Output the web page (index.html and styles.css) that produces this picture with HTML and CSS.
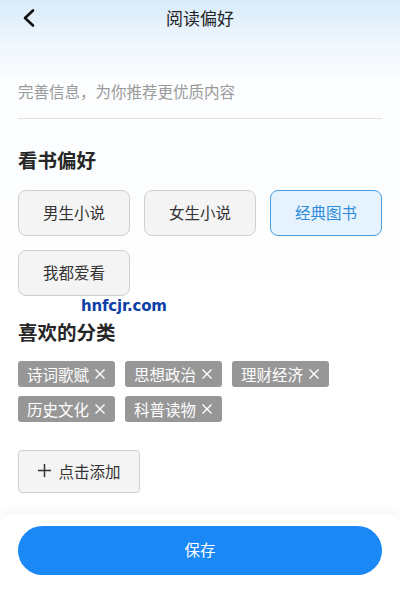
FILE: index.html
```html
<!DOCTYPE html>
<html lang="zh">
<head>
<meta charset="utf-8">
<link rel="stylesheet" href="styles.css">
</head>
<body>
<div class="page">
  <header class="topbar">
    <svg class="back" width="14" height="20" viewBox="0 0 14 20"><path d="M11 2.5 L3 10 L11 17.5" fill="none" stroke="#111" stroke-width="2.6" stroke-linecap="round" stroke-linejoin="round"/></svg>
    <h1 class="title">阅读偏好</h1>
  </header>
  <main class="content">
    <p class="intro">完善信息，为你推荐更优质内容</p>
    <h2 class="section-title first">看书偏好</h2>
    <div class="choices">
      <button class="choice">男生小说</button>
      <button class="choice">女生小说</button>
      <button class="choice selected">经典图书</button>
      <button class="choice">我都爱看</button>
    </div>
    <h2 class="section-title second">喜欢的分类</h2>
    <div class="tags">
      <span class="tag">诗词歌赋<svg class="x" viewBox="0 0 12 12"><path d="M1.5 1.5 L10.5 10.5 M10.5 1.5 L1.5 10.5"/></svg></span>
      <span class="tag">思想政治<svg class="x" viewBox="0 0 12 12"><path d="M1.5 1.5 L10.5 10.5 M10.5 1.5 L1.5 10.5"/></svg></span>
      <span class="tag">理财经济<svg class="x" viewBox="0 0 12 12"><path d="M1.5 1.5 L10.5 10.5 M10.5 1.5 L1.5 10.5"/></svg></span>
      <span class="tag">历史文化<svg class="x" viewBox="0 0 12 12"><path d="M1.5 1.5 L10.5 10.5 M10.5 1.5 L1.5 10.5"/></svg></span>
      <span class="tag">科普读物<svg class="x" viewBox="0 0 12 12"><path d="M1.5 1.5 L10.5 10.5 M10.5 1.5 L1.5 10.5"/></svg></span>
    </div>
    <button class="add"><svg class="plus" viewBox="0 0 16 16"><path d="M8 1 V15 M1 8 H15"/></svg>点击添加</button>
  </main>
  <footer class="bottom">
    <button class="save">保存</button>
  </footer>
  <div class="watermark">hnfcjr.com</div>
</div>
</body>
</html>
```
FILE: styles.css
```css
* { box-sizing: border-box; }
html, body { margin: 0; padding: 0; }
body {
  width: 400px;
  height: 608px;
  overflow: hidden;
  font-family: "Noto Sans CJK SC", "Noto Sans", sans-serif;
  color: #333;
  background: #fff;
}
.page {
  position: relative;
  height: 608px;
  display: flex;
  flex-direction: column;
  background: linear-gradient(180deg, #d8ebfb 0px, #eef6fd 40px, #fbfdff 80px, #fcfdfe 200px, #ffffff 300px);
}
.topbar {
  height: 36px;
  position: relative;
  display: flex;
  align-items: center;
  justify-content: center;
}
.back {
  position: absolute;
  left: 22px;
  top: 8px;
}
.title {
  margin: 0;
  font-size: 17px;
  font-weight: 400;
  color: #222;
  line-height: 36px;
}
.content {
  padding: 0 18px;
}
.intro {
  margin: 43px 0 0;
  font-size: 15.5px;
  line-height: 24px;
  color: #9a9a9a;
  padding-bottom: 15px;
  border-bottom: 1px solid #e2e2e2;
}
.section-title {
  margin: 0;
  font-size: 19.5px;
  font-weight: 700;
  line-height: 28px;
  color: #262626;
}
.section-title.first { margin-top: 27px; }
.section-title.second { margin-top: 22px; }
.choices {
  margin-top: 16px;
  display: grid;
  grid-template-columns: repeat(3, 112px);
  column-gap: 14px;
  row-gap: 14px;
}
.choice {
  height: 46px;
  border: 1px solid #cfcfcf;
  border-radius: 8px;
  background: #f4f4f4;
  font-family: inherit;
  font-size: 15.5px;
  color: #333;
  padding: 0 0 2px;
}
.choice.selected {
  background: #e6f3fe;
  border-color: #4b9fe1;
  color: #2f8bdc;
}
.tags {
  margin-top: 15px;
  display: flex;
  flex-wrap: wrap;
  column-gap: 10px;
  row-gap: 9px;
  width: 320px;
}
.tag {
  height: 26px;
  width: 97px;
  background: #979797;
  border-radius: 3px;
  color: #fff;
  font-size: 15.5px;
  display: flex;
  align-items: center;
  justify-content: center;
  gap: 5px;
}
.x {
  width: 12px;
  height: 12px;
  stroke: #fff;
  stroke-width: 1.4;
  fill: none;
}
.add {
  margin-top: 28px;
  width: 122px;
  height: 43px;
  border: 1px solid #cfcfcf;
  border-radius: 4px;
  background: #f4f4f4;
  font-family: inherit;
  font-size: 15.5px;
  color: #333;
  display: flex;
  align-items: center;
  justify-content: center;
  gap: 6px;
  padding: 0 0 2px;
}
.plus {
  width: 15px;
  height: 15px;
  stroke: #333;
  stroke-width: 1.6;
  fill: none;
}
.bottom {
  margin-top: auto;
  height: 94px;
  background: #fff;
  border-radius: 14px 14px 0 0;
  box-shadow: 0 -6px 12px rgba(0, 0, 0, 0.035);
  padding: 12px 18px 0;
}
.save {
  width: 100%;
  height: 49px;
  border: none;
  border-radius: 25px;
  background: #1a88f5;
  color: #fff;
  font-family: inherit;
  font-size: 15.5px;
  padding: 0 0 3px;
}
.watermark {
  position: absolute;
  left: 81px;
  top: 296px;
  font-family: "DejaVu Sans", sans-serif;
  font-weight: 700;
  font-size: 15px;
  letter-spacing: -0.2px;
  color: #0d3fa6;
  line-height: 20px;
}
```
